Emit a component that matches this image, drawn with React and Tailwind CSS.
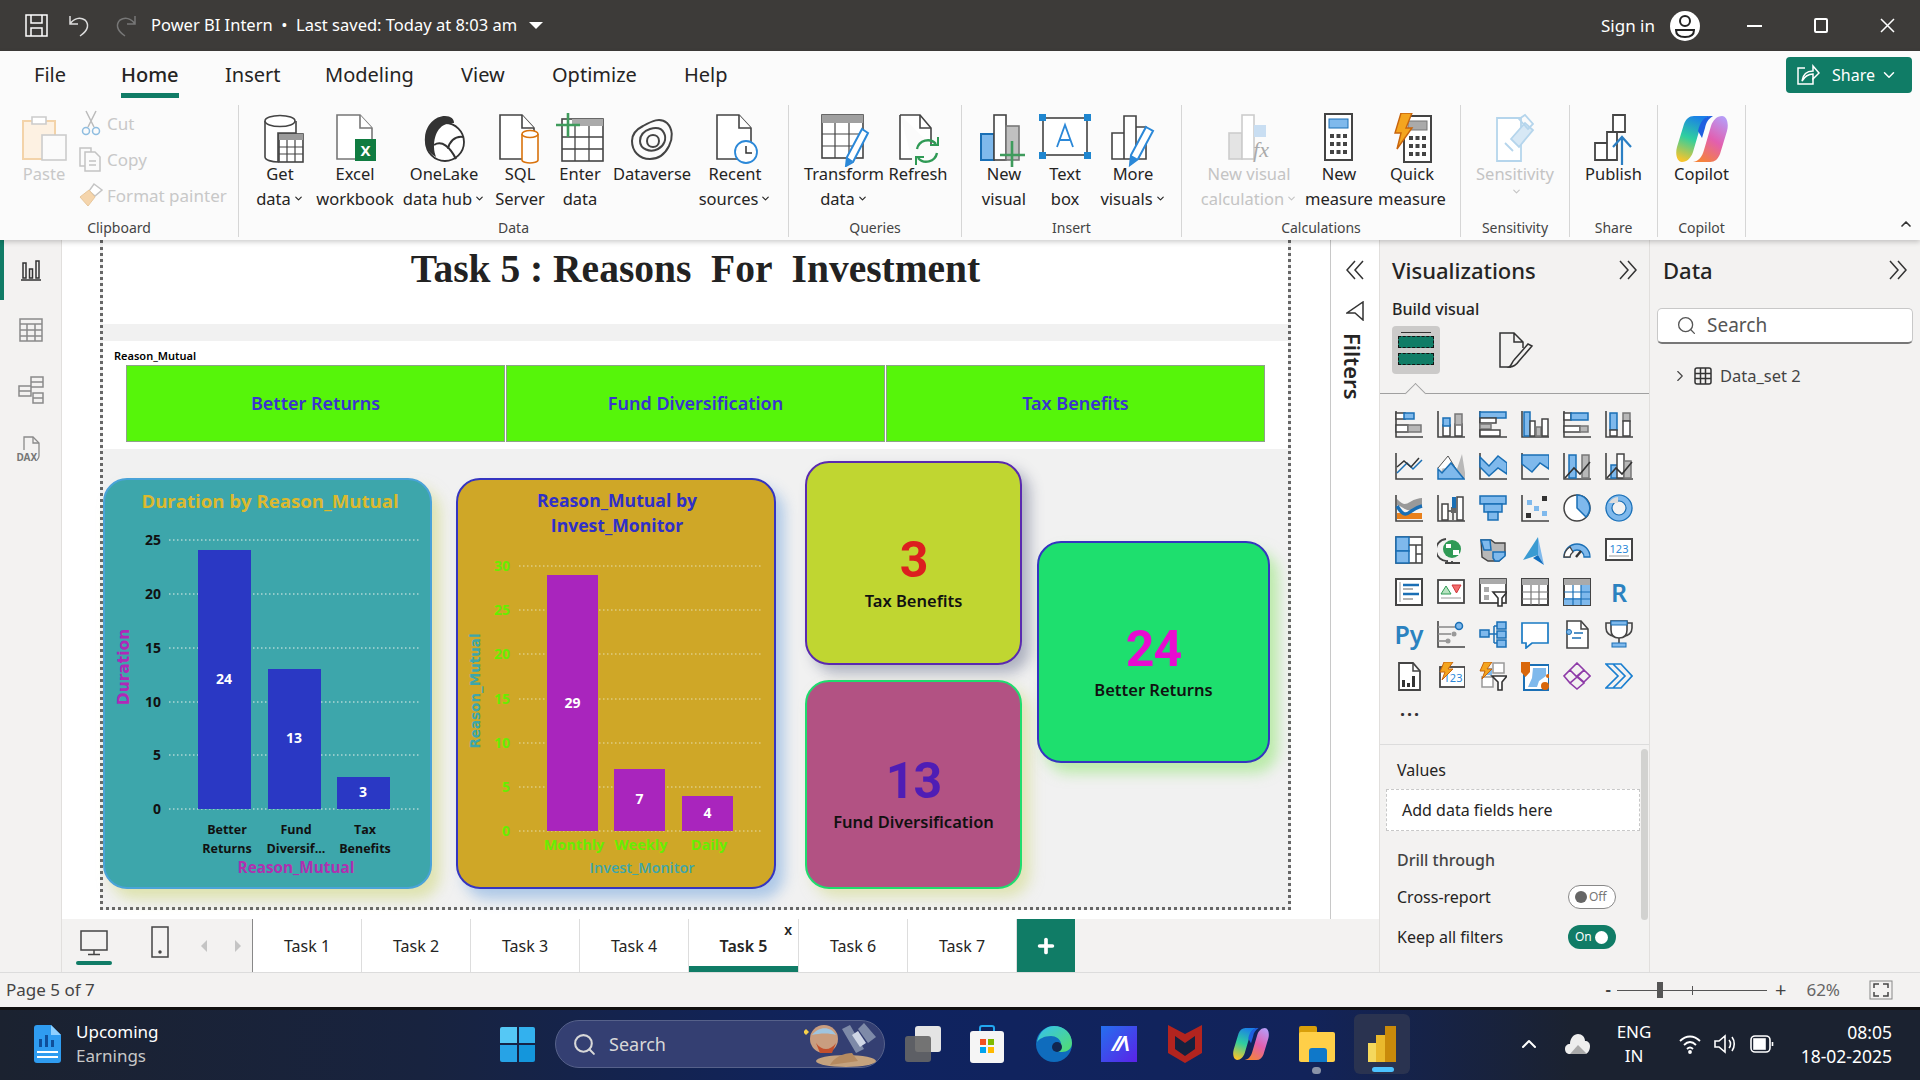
import { Search, ChevronDown, ChevronRight, ChevronUp, Plus } from "lucide-react";

const D = "#444";
const B = "#1a6fb5";
const L = "#7fb9ec";
const G = "#b8b8b8";

// ---------- ribbon icons ----------
const GetDataIcon = () => (
  <svg width="52" height="54" viewBox="0 0 52 54" fill="none">
    <path d="M11 8v36c0 3 7 5 13 5V20h18V8" fill="#fff" stroke={D} strokeWidth="1.6" />
    <ellipse cx="26" cy="8" rx="15" ry="5.5" fill="#fff" stroke={D} strokeWidth="1.6" />
    <rect x="25" y="21" width="24" height="28" fill="#fff" stroke={D} strokeWidth="1.6" />
    <rect x="25" y="21" width="24" height="6" fill="#9a9a9a" />
    <path d="M33 27v22M41 27v22M25 34h24M25 41h24" stroke={D} strokeWidth="1.2" />
  </svg>
);
const ExcelIcon = () => (
  <svg width="52" height="54" viewBox="0 0 52 54" fill="none">
    <path d="M8 2h23l12 13v31H8z" fill="#fff" stroke="#777" strokeWidth="1.6" />
    <path d="M31 2v13h12" fill="#fff" stroke="#777" strokeWidth="1.6" />
    <rect x="26" y="26" width="21" height="22" fill="#107c41" />
    <text x="36.5" y="43" textAnchor="middle" fontSize="15" fontWeight="700" fill="#fff">X</text>
  </svg>
);
const OneLakeIcon = () => (
  <svg width="52" height="54" viewBox="0 0 52 54" fill="none">
    <circle cx="27" cy="29" r="19" fill="#fff" stroke="#333" strokeWidth="1.8" />
    <path d="M27 3c6 0 9 3 9 7-12-1-20 8-20 24 0 4 1 7 2 10-9-5-12-13-11-20C8 12 17 3 27 3z" fill="#333" />
    <path d="M16 32c8-5 16 2 22 14M46 24c-10-2-15 6-16 12" stroke="#333" strokeWidth="2" />
  </svg>
);
const SqlIcon = () => (
  <svg width="52" height="54" viewBox="0 0 52 54" fill="none">
    <path d="M6 2h22l12 13v31H6z" fill="#fff" stroke={D} strokeWidth="1.6" />
    <path d="M28 2v13h12" fill="#fff" stroke={D} strokeWidth="1.6" />
    <path d="M28 21v26c0 2 5 3 8 3s8-1 8-3V21" fill="#fff" stroke="#d9730d" strokeWidth="1.6" />
    <ellipse cx="36" cy="21" rx="8" ry="3.5" fill="#fff" stroke="#d9730d" strokeWidth="1.6" />
  </svg>
);
const EnterDataIcon = () => (
  <svg width="52" height="54" viewBox="0 0 52 54" fill="none">
    <rect x="8" y="6" width="41" height="42" fill="#fff" stroke={D} strokeWidth="1.6" />
    <rect x="18" y="6" width="31" height="7" fill="#aaa" />
    <path d="M21 13v35M35 13v35M8 24h41M8 36h41" stroke={D} strokeWidth="1.3" />
    <path d="M14 0v24M2 12h24" stroke="#3f9b5c" strokeWidth="2.6" />
  </svg>
);
const DataverseIcon = () => (
  <svg width="52" height="54" viewBox="0 0 52 54" fill="none" stroke="#444" strokeWidth="2">
    <path d="M6 28c0-7 5-12 11-15 9-5 17-9 24-3 6 6 6 15 2 23-4 8-11 13-19 13C13 46 6 38 6 28z" />
    <path d="M14 28c0-6 4-10 10-12 7-2 12 0 14 4 3 6 0 13-6 16-8 4-18 0-18-8z" />
    <path d="M21 28c0-4 3-6 6-6s6 2 6 6-3 6-6 6-6-2-6-6z" />
  </svg>
);
const RecentIcon = () => (
  <svg width="52" height="54" viewBox="0 0 52 54" fill="none">
    <path d="M8 2h22l12 13v31H8z" fill="#fff" stroke={D} strokeWidth="1.6" />
    <path d="M30 2v13h12" fill="#fff" stroke={D} strokeWidth="1.6" />
    <circle cx="37" cy="39" r="11" fill="#fff" stroke="#2b88d8" strokeWidth="1.8" />
    <path d="M37 33v7h6" stroke="#333" strokeWidth="1.5" />
  </svg>
);
const TransformIcon = () => (
  <svg width="52" height="54" viewBox="0 0 52 54" fill="none">
    <rect x="4" y="2" width="41" height="43" fill="#fff" stroke={D} strokeWidth="1.6" />
    <rect x="4" y="2" width="41" height="8" fill="#a0a0a0" />
    <path d="M17 10v35M31 10v35M4 21h41M4 33h41" stroke={D} strokeWidth="1.2" />
    <path d="M44 16l6 4-15 29-7 4 1-9z" fill="#fff" stroke="#2b88d8" strokeWidth="2" />
    <path d="M28 53l1-9 6 4z" fill="#2b88d8" />
  </svg>
);
const RefreshIcon = () => (
  <svg width="52" height="54" viewBox="0 0 52 54" fill="none">
    <path d="M8 2h20l11 13v17M20 46H8V2" fill="#fff" stroke={D} strokeWidth="1.6" />
    <path d="M28 2v13h11" stroke={D} strokeWidth="1.6" />
    <path d="M25 36a11 11 0 0 1 19-5M45 40a11 11 0 0 1-19 5" stroke="#2f9a55" strokeWidth="2.4" />
    <path d="M46 24v8h-8M24 52v-8h8" stroke="#2f9a55" strokeWidth="2" />
  </svg>
);
const NewVisualIcon = () => (
  <svg width="52" height="54" viewBox="0 0 52 54" fill="none">
    <rect x="3" y="21" width="13" height="26" fill={L} stroke={B} strokeWidth="2" />
    <rect x="16" y="2" width="12" height="45" fill="#fff" stroke={D} strokeWidth="1.6" />
    <rect x="28" y="13" width="13" height="34" fill="#c0c0c0" stroke="#777" strokeWidth="1.6" />
    <path d="M34 28v26M22 42h25" stroke="#3f9b5c" strokeWidth="2.6" />
  </svg>
);
const TextBoxIcon = () => (
  <svg width="52" height="54" viewBox="0 0 52 54" fill="none">
    <rect x="4" y="5" width="44" height="37" fill="#fff" stroke={D} strokeWidth="1.6" />
    <path d="M0 1h7v7H0zM45 1h7v7h-7zM0 39h7v7H0zM45 39h7v7h-7z" fill="#1f86cf" />
    <path d="M18 34l8-22 8 22M21 27h10" stroke="#2b88d8" strokeWidth="1.8" />
  </svg>
);
const MoreVisualsIcon = () => (
  <svg width="52" height="54" viewBox="0 0 52 54" fill="none">
    <path d="M5 20h12v26H5zM17 3h12v43H17zM29 14h10v32H29z" fill="#fff" stroke={D} strokeWidth="1.6" />
    <path d="M39 14l7 4-15 28-8 6 1-10z" fill="#fff" stroke="#2b88d8" strokeWidth="2" />
    <path d="M23 52l1-10 7 4z" fill="#2b88d8" />
  </svg>
);
const NewCalcIcon = () => (
  <svg width="52" height="54" viewBox="0 0 52 54" fill="none">
    <rect x="6" y="20" width="13" height="26" fill="#e4e4e4" stroke="#ccc" strokeWidth="1.6" />
    <rect x="19" y="2" width="12" height="44" fill="#fff" stroke="#ccc" strokeWidth="1.6" />
    <rect x="31" y="12" width="12" height="12" fill="#c9def2" />
    <text x="38" y="44" textAnchor="middle" fontFamily="'Liberation Serif',serif" fontStyle="italic" fontSize="22" fill="#aaa">fx</text>
  </svg>
);
const Calculator = ({ top }) => (
  <>
    <rect x="12" y="1" width="27" height="46" fill="#fff" stroke={D} strokeWidth="2" />
    <rect x="16" y="6" width="19" height="9" fill={top} stroke={top === L ? B : "#777"} />
    {[21, 29, 37].map((y) => [17, 23.5, 30].map((x) => <rect key={`${x}-${y}`} x={x} y={y} width="4" height="4" fill="#444" />))}
  </>
);
const NewMeasureIcon = () => (
  <svg width="52" height="54" viewBox="0 0 52 54" fill="none"><Calculator top={L} /></svg>
);
const QuickMeasureIcon = () => (
  <svg width="52" height="54" viewBox="0 0 52 54" fill="none">
    <g transform="translate(6 2)"><Calculator top="#aaa" /></g>
    <path d="M15 0h11l-6 15h6L11 36l4-16H9z" fill="#f4a51f" stroke="#c8640c" strokeWidth="1.4" />
  </svg>
);
const SensitivityIcon = () => (
  <svg width="52" height="54" viewBox="0 0 52 54" fill="none" stroke="#b5d5ec" strokeWidth="1.8">
    <path d="M8 5h24v43H8z" fill="#fff" />
    <path d="M22 26l14-16 8 7-14 17z" fill="#d7e8f5" />
    <path d="M30 6l6-4 8 9-5 5zM16 30l8 8" />
  </svg>
);
const PublishIcon = () => (
  <svg width="52" height="54" viewBox="0 0 52 54" fill="none">
    <path d="M7 30h12v17H7zM19 19h10v28H19zM25 2h12v17H25z" fill="#fff" stroke="#444" strokeWidth="1.8" />
    <path d="M34 52V24M25 34l9-10 9 10" stroke="#2b7fc4" strokeWidth="2.2" />
  </svg>
);
const CopilotIcon = ({ size = 52, id = "cp" }) => (
  <svg width={size} height={size} viewBox="0 0 52 52" fill="none">
    <defs>
      <linearGradient id={`${id}1`} x1="0.6" y1="0" x2="0.3" y2="1">
        <stop offset="0" stopColor="#1a7fe8" />
        <stop offset="0.5" stopColor="#2fcf9f" />
        <stop offset="1" stopColor="#f6c42c" />
      </linearGradient>
      <linearGradient id={`${id}2`} x1="0.8" y1="0" x2="0.3" y2="1">
        <stop offset="0" stopColor="#b79bf5" />
        <stop offset="0.5" stopColor="#e25fb0" />
        <stop offset="1" stopColor="#f5823b" />
      </linearGradient>
    </defs>
    <path d="M18 3h17c-6 1-9 5-11 12l-7 24c-2 6-6 10-11 10C1 49-1 41 1 34L8 11C10 6 13 3 18 3z" fill={`url(#${id}1)`} />
    <path d="M34 49H17c6-1 9-5 11-12l7-24c2-6 6-10 11-10 5 0 7 8 5 15l-7 23c-2 5-5 8-10 8z" fill={`url(#${id}2)`} />
    <path d="M22 18c2-9 6-14 12-15h3c-5 3-7 7-8 12l-3 10z" fill="#1f5fe0" />
  </svg>
);
const ShareIcon = () => (
  <svg width="24" height="22" viewBox="0 0 24 22" fill="none" stroke="#fff" strokeWidth="1.5">
    <path d="M9 4H2v16h15v-6" />
    <path d="M6 17c1-7 5-10 11-10V2l6 7-6 6v-5c-4 0-8 2-11 7z" />
  </svg>
);

// ---------- visual gallery ----------
const Axis = () => <path d="M1 1v26h27" stroke={D} strokeWidth="1.6" fill="none" />;
const Box = ({ x, y, w, h, f = "#fff", s = D }) => <rect x={x} y={y} width={w} height={h} fill={f} stroke={s} strokeWidth="1.5" />;

const vizIcons = [
  <><Axis /><Box x={1} y={3} w={9} h={6} /><Box x={9} y={3} w={10} h={6} f={L} s={B} /><Box x={1} y={15} w={12} h={7} /><Box x={13} y={15} w={13} h={7} f={G} s="#777" /></>,
  <><Axis /><Box x={6} y={15} w={7} h={11} /><Box x={6} y={8} w={7} h={8} f={L} s={B} /><Box x={18} y={14} w={7} h={12} /><Box x={18} y={4} w={7} h={11} f={G} s="#777" /></>,
  <><Axis /><Box x={1} y={2} w={26} h={6} f={L} s={B} /><Box x={1} y={8} w={16} h={5} /><Box x={1} y={14} w={11} h={5} f={G} s="#777" /><Box x={1} y={20} w={20} h={6} /></>,
  <><Axis /><Box x={3} y={2} w={6} h={24} f={L} s={B} /><Box x={9} y={11} w={5} h={15} /><Box x={15} y={17} w={5} h={9} f={G} s="#777" /><Box x={21} y={9} w={6} h={17} /></>,
  <><Axis /><Box x={1} y={3} w={7} h={7} /><Box x={8} y={3} w={17} h={7} f={L} s={B} /><Box x={1} y={16} w={16} h={6} /><Box x={17} y={16} w={8} h={6} f={G} s="#777" /></>,
  <><Axis /><Box x={5} y={3} w={7} h={17} f={L} s={B} /><Box x={5} y={20} w={7} h={6} /><Box x={18} y={3} w={7} h={8} f={G} s="#777" /><Box x={18} y={11} w={7} h={15} /></>,
  <><Axis /><path d="M2 21l10-10 6 6 9-9" stroke={B} strokeWidth="1.5" fill="none" /><path d="M2 15l7-6 7 6 8-9" stroke="#333" strokeWidth="1.5" fill="none" /></>,
  <><path d="M1 27l10-23 8 16 6-18 4 25z" fill={G} /><path d="M1 16l10-12 8 13" stroke="#555" fill="#fff" /><path d="M1 27V17l4 4 9-10 13 16z" fill={L} stroke={B} strokeWidth="1.5" /></>,
  <><Axis /><path d="M1 5l9 9 9-10 9 7v11l-9-6-9 8-9-9z" fill={L} stroke={B} strokeWidth="1.5" /></>,
  <><Axis /><path d="M1 3h27v14l-9-6-8 9-10-8z" fill={L} stroke={B} strokeWidth="1.5" /></>,
  <><Axis /><Box x={6} y={3} w={7} h={23} f={L} s={B} /><Box x={19} y={3} w={7} h={23} f={G} s="#777" /><path d="M2 26l9-10 6 6 10-12" stroke="#333" strokeWidth="1.6" fill="none" /></>,
  <><Axis /><Box x={6} y={13} w={7} h={13} f={L} s={B} /><Box x={12} y={2} w={7} h={24} /><Box x={19} y={9} w={7} h={17} f={G} s="#777" /><path d="M2 26l9-10 6 6 10-12" stroke="#333" strokeWidth="1.6" fill="none" /></>,
  <><Axis /><path d="M2 5c6 6 8 6 13 3s9-4 12-4v8c-4 0-8 3-12 4s-7-3-13-5z" fill="#999" /><rect x="2" y="19" width="25" height="6" fill="#e8801c" /><path d="M2 12c5 8 8 10 13 6s8-5 12-6" stroke={B} strokeWidth="3.5" fill="none" /></>,
  <><Axis /><Box x={5} y={10} w={6} h={16} /><path d="M11 17h5v9" stroke={D} strokeWidth="1.5" fill="none" /><rect x="14" y="13" width="5" height="6" fill="#666" /><rect x="15" y="3" width="4" height="11" fill={B} /><Box x={20} y={3} w={6} h={23} /></>,
  <><Box x={1} y={2} w={26} h={8} f={L} s={B} /><Box x={5} y={10} w={18} h={8} f={L} s={B} /><Box x={9} y={18} w={10} h={8} f={L} s={B} /></>,
  <><Axis /><rect x="6" y="6" width="5" height="5" fill={L} /><rect x="21" y="2" width="5" height="5" fill="#333" /><rect x="13" y="12" width="5" height="5" fill={L} /><rect x="5" y="19" width="5" height="5" fill="#333" /><rect x="21" y="17" width="5" height="5" fill={L} /></>,
  <><circle cx="14" cy="14" r="13" fill="#fff" stroke="#444" strokeWidth="1.5" /><path d="M14 1a13 13 0 0 1 9 22L14 14z" fill={L} stroke={B} strokeWidth="1.5" /></>,
  <><circle cx="14" cy="14" r="10" fill="none" stroke={L} strokeWidth="7" /><circle cx="14" cy="14" r="13" fill="none" stroke={B} strokeWidth="1.2" /><circle cx="14" cy="14" r="7" fill="#f3f2f1" stroke={B} strokeWidth="1.2" /><path d="M4 9a11 11 0 0 1 9-6v6" fill="#ddd" /></>,
  <><rect x="1" y="1" width="26" height="26" fill="#fff" stroke={D} strokeWidth="1.6" /><rect x="1" y="1" width="13" height="14" fill={L} stroke={B} strokeWidth="1.5" /><rect x="1" y="15" width="13" height="12" fill={L} stroke={B} strokeWidth="1.5" /><path d="M14 9h13M21 9v18M21 18h6" stroke={D} strokeWidth="1.5" /></>,
  <><path d="M9 3a11 11 0 0 0 2 22M8 27h15M15 25v2" stroke="#444" strokeWidth="1.8" fill="none" /><circle cx="15" cy="13" r="9" fill="#2f9a55" /><path d="M9 8h5v4h-5zM16 14h6v5h-6z" fill="#fff" /></>,
  <><path d="M2 4h10l4 3h10v12l-6 6H9l-6-4z" fill={G} stroke="#444" strokeWidth="1.4" /><path d="M2 4h9l1 10H5z" fill={L} stroke={B} strokeWidth="1.5" /><path d="M14 16h12v4l-6 5h-4l-2-3z" fill={L} stroke={B} strokeWidth="1.5" /></>,
  <><path d="M17 1L2 24l15-5z" fill="#3a9bd2" /><path d="M17 1l6 28-6-10z" fill={L} /><path d="M17 19l6 10-11-7z" fill="#0f6cbd" /></>,
  <><path d="M1 21a13 13 0 0 1 26 0h-6a7 7 0 0 0-14 0z" fill="#7fb9ec" stroke={B} strokeWidth="1.3" /><path d="M1 21a13 13 0 0 1 6-10l3 5a7 7 0 0 0-3 5z" fill="#fff" stroke="#444" strokeWidth="1.3" /><path d="M13 21l5-6" stroke="#333" strokeWidth="2.4" /></>,
  <><rect x="1" y="3" width="26" height="21" fill="#fff" stroke={D} strokeWidth="2" /><text x="14" y="17" textAnchor="middle" fontSize="11" fill="#2b88d8">123</text><path d="M4 20h20" stroke="#999" /></>,
  <><rect x="1" y="1" width="26" height="26" fill="#fff" stroke={D} strokeWidth="2" /><path d="M5 4v20" stroke="#999" /><path d="M8 7h16M8 16h16" stroke={B} strokeWidth="2.6" /><path d="M8 11h10M8 21h10" stroke="#999" strokeWidth="1.6" /></>,
  <><rect x="1" y="2" width="26" height="23" fill="#fff" stroke={D} strokeWidth="1.8" /><path d="M9 8l5 8H4z" fill="#b7e3c0" stroke="#2f9a55" /><path d="M15 7h9l-4.5 8z" fill="#f26d6d" stroke="#d13438" /><path d="M4 20h20" stroke="#999" /></>,
  <><rect x="1" y="1" width="26" height="24" fill="#fff" stroke={D} strokeWidth="1.8" /><rect x="1" y="1" width="26" height="5" fill="#aaa" /><rect x="5" y="9" width="5" height="5" fill="#aaa" /><rect x="5" y="17" width="5" height="5" fill="#aaa" /><path d="M14 14h14l-5 6v8h-4v-8z" fill="#fff" stroke="#333" strokeWidth="1.6" /></>,
  <><rect x="1" y="1" width="26" height="26" fill="#fff" stroke={D} strokeWidth="2" /><rect x="1" y="1" width="26" height="6" fill="#aaa" /><path d="M10 7v20M18 7v20M1 14h26M1 21h26" stroke="#777" strokeWidth="1.2" /></>,
  <><rect x="1" y="1" width="26" height="26" fill="#fff" stroke={D} strokeWidth="2" /><rect x="1" y="1" width="26" height="6" fill="#aaa" /><rect x="18" y="7" width="9" height="20" fill={L} /><rect x="1" y="20" width="26" height="7" fill={L} /><path d="M10 7v20M18 7v20M1 14h26M1 21h26" stroke={B} strokeWidth="1.2" /></>,
  "R",
  "Py",
  <><Axis /><path d="M1 7h17M1 14h13M1 21h9" stroke="#888" strokeWidth="1.4" /><circle cx="22" cy="6" r="3.5" fill={L} stroke={B} strokeWidth="1.5" /><circle cx="17" cy="14" r="2.5" fill="#999" /><circle cx="11" cy="21" r="2.5" fill="#999" /></>,
  <><path d="M9 14h6M15 6v17M15 6h3M15 14h3M15 23h3" stroke={B} strokeWidth="1.5" /><Box x={1} y={10} w={9} h={7} f={L} s={B} /><Box x={18} y={2} w={9} h={7} f={L} s={B} /><Box x={18} y={11} w={9} h={7} f={L} s={B} /><Box x={18} y={20} w={9} h={7} f={L} s={B} /></>,
  <path d="M1 3h26v20H11l-6 5v-5H1z" fill="#fff" stroke="#1a7bc4" strokeWidth="1.7" />,
  <><path d="M4 1h14l7 8v19H4z" fill="#fff" stroke={D} strokeWidth="1.6" /><path d="M18 1v8h7" fill="none" stroke={D} strokeWidth="1.5" /><circle cx="6" cy="12" r="2.5" fill={L} stroke={B} /><path d="M11 13h9M9 18h9" stroke={B} strokeWidth="1.4" /></>,
  <><path d="M6 3H1v5c0 5 4 8 8 8M22 3h5v5c0 5-4 8-8 8" fill="none" stroke="#444" strokeWidth="1.6" /><path d="M6 1h16v9c0 5-3 8-8 8s-8-3-8-8z" fill="#fff" stroke="#444" strokeWidth="1.6" /><rect x="6" y="1" width="16" height="4" fill={L} stroke={B} /><path d="M14 18v5" stroke="#444" strokeWidth="1.6" /><rect x="7" y="23" width="14" height="4" fill={L} stroke={B} /></>,
  <><path d="M4 1h14l7 8v19H4z" fill="#fff" stroke={D} strokeWidth="1.8" /><path d="M18 1v8h7" fill="none" stroke={D} strokeWidth="1.5" /><path d="M7 18h3v7H7zM12 21h3v4h-3zM17 14h3v11h-3z" fill="#333" /></>,
  <><rect x="3" y="5" width="25" height="20" fill="#fff" stroke={D} strokeWidth="1.8" /><text x="16" y="20" textAnchor="middle" fontSize="11" fill="#2b88d8">123</text><path d="M7 0h9l-5 7h5L5 18l3-8H3z" fill="#f4a51f" stroke="#c8640c" /></>,
  <><Box x={14} y={1} w={11} h={10} s="#999" /><Box x={3} y={15} w={11} h={10} s="#999" /><rect x="5" y="6" width="8" height="7" fill={L} /><path d="M13 14h15l-5 6v8h-4v-8z" fill="#fff" stroke="#333" strokeWidth="1.6" /><path d="M5 0h8l-5 7h5L3 17l3-8H1z" fill="#f4a51f" stroke="#c8640c" /></>,
  <><path d="M3 3h25v25H3z" fill="#fff" stroke="#1a6fb5" strokeWidth="2" /><path d="M12 6h13v8l-7 5-2 6H7l4-9z" fill={L} /><path d="M0 0h9v10l-4.500 5L0 10z" fill="#d9670b" /><circle cx="24" cy="24" r="4" fill="#d9670b" /><circle cx="27" cy="14" r="2" fill="#d9670b" /></>,
  <g fill="none" stroke="#8e3ba8" strokeWidth="1.6"><path d="M14 1l7 7-7 7-7-7zM21 8l6 6-6 6-7-6zM7 8l7 7-7 6-6-7zM14 15l7 6-7 6-7-6z" /></g>,
  <g fill="none" stroke="#1a7fd0" strokeWidth="1.7"><path d="M1 2h15l11 12-11 12H1l12-12zM8 26l12-12-12-12" /></g>,
];

const VizIcon = ({ i }) => {
  const icon = vizIcons[i];
  if (typeof icon === "string") {
    return <div className="flex items-center justify-center text-[25px] leading-[30px] font-semibold text-[#2b82c0]">{icon}</div>;
  }
  return (
    <div className="flex items-center justify-center">
      <svg width="28" height="29" viewBox="0 0 28 29" fill="none">{icon}</svg>
    </div>
  );
};

// ---------- ribbon bits ----------
function RItem({ w, icon, l1, l2, caret, off }) {
  return (
    <div className={`flex flex-col items-center ${w} ${off ? "text-[#c4c4c4]" : "text-[#252423]"}`}>
      <div className="h-[54px] w-[52px]">{icon}</div>
      <div className="-mt-[6px] whitespace-nowrap text-center text-[16.5px] leading-[25px]">{l1}</div>
      <div className="flex items-center whitespace-nowrap text-center text-[16.5px] leading-[25px]">
        {l2}
        {caret && <ChevronDown size={11} strokeWidth={2.5} className="ml-[2px]" />}
      </div>
    </div>
  );
}

function RGroup({ w, pad, label, children }) {
  return (
    <div className={`flex h-[132px] flex-col border-r border-[#d6d6d6] ${w}`}>
      <div className={`flex h-[116px] pt-[8px] ${pad}`}>{children}</div>
      <div className="flex-1 text-center text-[14px] leading-[19px] text-[#444]">{label}</div>
    </div>
  );
}

const DoubleChevron = ({ left }) => (
  <svg width="18" height="20" viewBox="0 0 18 20" fill="none" stroke="#333" strokeWidth="1.5">
    {left ? <path d="M9 1L1 10l8 9M17 1l-8 9 8 9" /> : <path d="M1 1l8 9-8 9M9 1l8 9-8 9" />}
  </svg>
);

// ---------- report visuals ----------
function DurationChart() {
  const ticks = [[25, 540], [20, 594], [15, 648], [10, 702], [5, 755], [0, 809]];
  const bars = [[198, 550, 24, 679], [268, 669, 13, 738], [337, 777, 3, 792]];
  return (
    <svg width="325" height="407" viewBox="105 480 325 407" className="block font-['Open_Sans',sans-serif]">
      <text x="270" y="508" textAnchor="middle" fontSize="18.6" fontWeight="700" fill="#dcb92e">Duration by Reason_Mutual</text>
      {ticks.map(([t, y]) => (
        <g key={t}>
          <path d={`M169 ${y}H421`} stroke="#e6efe9" strokeDasharray="1.5 2.5" />
          <text x="161" y={y + 5} textAnchor="end" fontSize="14" fontWeight="700" fill="#111">{t}</text>
        </g>
      ))}
      {bars.map(([x, top, v, ly]) => (
        <g key={v}>
          <rect x={x} y={top} width="53" height={809 - top} fill="#2a38c4" />
          <text x={x + 26} y={ly + 5} textAnchor="middle" fontSize="14" fontWeight="700" fill="#fff">{v}</text>
        </g>
      ))}
      {[[227, "Better", "Returns"], [296, "Fund", "Diversif..."], [365, "Tax", "Benefits"]].map(([x, a, b]) => (
        <text key={a} textAnchor="middle" fontSize="12.5" fontWeight="700" fill="#111">
          <tspan x={x} y="834">{a}</tspan>
          <tspan x={x} y="853">{b}</tspan>
        </text>
      ))}
      <text x="296" y="873" textAnchor="middle" fontSize="15.3" fontWeight="700" fill="#b030b0">Reason_Mutual</text>
      <text transform="translate(129 667) rotate(-90)" textAnchor="middle" fontFamily="'DejaVu Sans',sans-serif" fontSize="15.5" fontWeight="700" fill="#b028b8">Duration</text>
    </svg>
  );
}

function MonitorChart() {
  const ticks = [[30, 566], [25, 610], [20, 654], [15, 699], [10, 743], [5, 787], [0, 831]];
  const bars = [[547, 575, 29, 703], [614, 769, 7, 799], [682, 796, 4, 813]];
  return (
    <svg width="316" height="407" viewBox="458 480 316 407" className="block font-['Open_Sans',sans-serif]">
      <text textAnchor="middle" fontSize="17.6" fontWeight="700" fill="#3030c8">
        <tspan x="617" y="507">Reason_Mutual by</tspan>
        <tspan x="617" y="532">Invest_Monitor</tspan>
      </text>
      {ticks.map(([t, y]) => (
        <g key={t}>
          <path d={`M519 ${y}H761`} stroke="#e6dfae" strokeDasharray="1.5 2.5" />
          <text x="510" y={y + 5} textAnchor="end" fontSize="14" fontWeight="700" fill="#66ee00">{t}</text>
        </g>
      ))}
      {bars.map(([x, top, v, ly]) => (
        <g key={v}>
          <rect x={x} y={top} width="51" height={831 - top} fill="#a925bd" />
          <text x={x + 25.5} y={ly + 5} textAnchor="middle" fontSize="14" fontWeight="700" fill="#fff">{v}</text>
        </g>
      ))}
      {[[574, "Monthly"], [641, "Weekly"], [709, "Daily"]].map(([x, c]) => (
        <text key={c} x={x} y="850" textAnchor="middle" fontSize="14.5" fontWeight="700" fill="#66ee00">{c}</text>
      ))}
      <text x="642" y="873" textAnchor="middle" fontSize="14.5" fontWeight="600" fill="#3da6ab">Invest_Monitor</text>
      <text transform="translate(480 691) rotate(-90)" textAnchor="middle" fontFamily="'DejaVu Sans',sans-serif" fontSize="13.5" fontWeight="600" fill="#3da6ab">Reason_Mutual</text>
    </svg>
  );
}

function KpiCard({ className, value, valueClass, label }) {
  return (
    <div className={`flex flex-col items-center rounded-[24px] border-2 ${className}`}>
      <div className={`font-['Roboto',sans-serif] text-[50px] leading-[50px] font-bold tracking-[-1px] ${valueClass}`}>{value}</div>
      <div className="mt-[4px] text-[16.5px] leading-[24px] font-semibold text-[#111]">{label}</div>
    </div>
  );
}

// ---------- taskbar icons ----------
const WidgetIcon = () => (
  <svg width="28" height="38" viewBox="0 0 28 38">
    <path d="M3 0h14l10 10v25a3 3 0 0 1-3 3H3a3 3 0 0 1-3-3V3a3 3 0 0 1 3-3z" fill="#2f9cf0" />
    <path d="M17 0l10 10H17z" fill="#8fd0ff" />
    <path d="M5 14h3v8H5zM11 10h3v12h-3zM17 15h3v7h-3z" fill="#0f4f9a" />
    <path d="M3 26h21v2H3zM3 31h21v2H3z" fill="#fff" />
  </svg>
);
const WinLogo = () => (
  <div className="grid h-[35px] w-[35px] grid-cols-2 gap-[2px]">
    <div className="rounded-tl-[2px] bg-[#55c8f5]" />
    <div className="rounded-tr-[2px] bg-[#33b1ee]" />
    <div className="rounded-bl-[2px] bg-[#27a3e6]" />
    <div className="rounded-br-[2px] bg-[#1496dc]" />
  </div>
);
const SearchArt = () => (
  <svg width="76" height="46" viewBox="0 0 76 46">
    <circle cx="20" cy="18" r="14" fill="#c99d7f" />
    <path d="M8 14c6-8 18-10 24 0-6-2-16-2-24 0z" fill="#9fc4e0" />
    <path d="M12 22c6 8 14 8 20 0l-4 10H16z" fill="#c24f2d" />
    <path d="M2 8l3 3-3 3-3-3z" fill="#f7d14a" />
    <path d="M46 4l14 24-8 4-14-24zM60 2l12 14-8 6-10-14z" fill="#7e8aa8" />
    <path d="M48 14l6-4 8 12-6 4z" fill="#cfd6e5" />
    <ellipse cx="42" cy="40" rx="30" ry="6" fill="#c4a27e" />
    <path d="M26 44c4-8 14-12 22-12l6 8z" fill="#b58a60" />
  </svg>
);
const EdgeIcon = () => (
  <svg width="36" height="38" viewBox="0 0 36 38">
    <defs>
      <linearGradient id="edge" x1="0" y1="0" x2="1" y2="1">
        <stop offset="0" stopColor="#35c1f1" />
        <stop offset="1" stopColor="#53dd6c" />
      </linearGradient>
    </defs>
    <circle cx="18" cy="19" r="18" fill="#0f6cbd" />
    <path d="M1 17C3 7 10 1 18 1c10 0 18 7 18 17 0 6-5 9-10 9-4 0-6-2-6-4 4-1 5-3 5-5-1-4-5-7-10-7-7 0-12 3-14 6z" fill="url(#edge)" />
    <circle cx="21" cy="22" r="5" fill="#12264f" />
  </svg>
);
const StoreIcon = () => (
  <svg width="34" height="38" viewBox="0 0 34 38">
    <path d="M10 7V3a2 2 0 0 1 2-2h10a2 2 0 0 1 2 2v4" fill="none" stroke="#22a7f0" strokeWidth="2" />
    <rect x="0" y="6" width="34" height="32" rx="3" fill="#f5f5f5" />
    <path d="M10 14h6v6h-6z" fill="#f25022" />
    <path d="M18 14h6v6h-6z" fill="#7fba00" />
    <path d="M10 22h6v6h-6z" fill="#00a4ef" />
    <path d="M18 22h6v6h-6z" fill="#ffb900" />
  </svg>
);

export default function App() {
  return (
    <div className="flex h-[1080px] w-[1920px] flex-col overflow-hidden bg-white font-['Noto_Sans',sans-serif] text-[#252423]">
      {/* title bar */}
      <div className="flex h-[51px] shrink-0 items-center bg-[#3d3b39] pl-[25px] text-white">
        <svg width="23" height="23" viewBox="0 0 23 23" fill="none" stroke="#fff" strokeWidth="1.5">
          <path d="M1 1h21v21H1zM6 1v8h11V1M6 22v-8h11v8" />
        </svg>
        <svg className="ml-[21px]" width="22" height="24" viewBox="0 0 22 24" fill="none" stroke="#ddd" strokeWidth="1.5">
          <path d="M1 2v8h8M1 10c4-6 10-7 15-4 4 4 4 10-5 16" />
        </svg>
        <svg className="ml-[23px]" width="22" height="24" viewBox="0 0 22 24" fill="none" stroke="#777" strokeWidth="1.5">
          <path d="M21 2v8h-8M21 10c-4-6-10-7-15-4-4 4-4 10 5 16" />
        </svg>
        <div className="ml-[15px] text-[16.5px] whitespace-nowrap">Power BI Intern&nbsp; • &nbsp;Last saved: Today at 8:03 am</div>
        <div className="ml-[12px] h-0 w-0 border-x-[7px] border-t-[7px] border-x-transparent border-t-white" />
        <div className="ml-auto text-[17px]">Sign in</div>
        <svg className="ml-[14px]" width="32" height="32" viewBox="0 0 32 32">
          <circle cx="16" cy="16" r="15" fill="#fff" />
          <circle cx="16" cy="11" r="5" fill="none" stroke="#222" strokeWidth="2" />
          <path d="M7 20h18c0 5-4 7-9 7s-9-2-9-7z" fill="none" stroke="#222" strokeWidth="2" />
        </svg>
        <div className="ml-[46px] h-[2px] w-[15px] bg-white" />
        <div className="ml-[52px] h-[15px] w-[14px] rounded-[2px] border-2 border-white" />
        <svg className="mr-[25px] ml-[52px]" width="15" height="15" viewBox="0 0 15 15" stroke="#fff" strokeWidth="1.5">
          <path d="M1 1l13 13M14 1L1 14" />
        </svg>
      </div>

      {/* ribbon */}
      <div className="relative z-10 h-[189px] shrink-0 bg-[#fbfbfb] shadow-[0_2px_5px_rgba(0,0,0,0.2)]">
        <div className="flex h-[54px] items-start pl-[34px] text-[20px] leading-[28px]">
          <div className="w-[87px] pt-[10px]">File</div>
          <div className="w-[104px] pt-[10px]">
            <div className="inline-block font-medium">
              Home
              <div className="mt-[4px] h-[5px] bg-[#107c66]" />
            </div>
          </div>
          <div className="w-[100px] pt-[10px]">Insert</div>
          <div className="w-[136px] pt-[10px]">Modeling</div>
          <div className="w-[91px] pt-[10px]">View</div>
          <div className="w-[132px] pt-[10px]">Optimize</div>
          <div className="pt-[10px]">Help</div>
          <div className="mt-[6px] mr-[8px] ml-auto flex h-[36px] w-[126px] items-center rounded-[4px] bg-[#107c66] pl-[10px] text-[16px] text-white">
            <ShareIcon />
            <span className="ml-[12px]">Share</span>
            <ChevronDown size={18} className="ml-[5px]" />
          </div>
        </div>

        <div className="flex">
          <RGroup w="w-[239px]" pad="pl-[18px]" label="Clipboard">
            <div className="flex w-[52px] flex-col items-center text-[#c8c8c8]">
              <svg width="48" height="54" viewBox="0 0 48 54" fill="none">
                <rect x="3" y="8" width="32" height="38" fill="#fdf1e2" stroke="#f3d3a9" strokeWidth="2" />
                <path d="M12 4h14v7H12z" fill="#fff" stroke="#ccc" strokeWidth="1.6" />
                <rect x="22" y="22" width="24" height="25" fill="#fbfbfb" stroke="#ccc" strokeWidth="1.6" />
              </svg>
              <div className="-mt-[6px] text-[16.5px] leading-[25px]">Paste</div>
            </div>
            <div className="-mt-[3px] ml-[8px] flex flex-col gap-[10px] text-[17px] leading-[25px] text-[#c8c8c8]">
              <div className="flex items-center">
                <svg width="26" height="26" viewBox="0 0 26 26" fill="none">
                  <path d="M8 1l8 16M18 1l-8 16" stroke="#bbb" strokeWidth="1.5" />
                  <circle cx="8" cy="21" r="3.5" stroke="#8fbde0" strokeWidth="1.5" />
                  <circle cx="18" cy="21" r="3.5" stroke="#8fbde0" strokeWidth="1.5" />
                </svg>
                <span className="ml-[3px]">Cut</span>
              </div>
              <div className="flex items-center">
                <svg width="26" height="26" viewBox="0 0 26 26" fill="none" stroke="#c4c4c4" strokeWidth="1.5">
                  <path d="M2 2h11v18H2z" />
                  <path d="M7 6h10l5 5v14H7z" fill="#fbfbfb" />
                  <path d="M11 15h7M11 19h7" />
                </svg>
                <span className="ml-[3px]">Copy</span>
              </div>
              <div className="flex items-center">
                <svg width="26" height="26" viewBox="0 0 26 26" fill="none">
                  <path d="M16 2l8 6-7 6-6-5z" fill="#fff" stroke="#c4c4c4" strokeWidth="1.5" />
                  <path d="M11 8l6 7-7 9-8-9z" fill="#f5d5ac" stroke="#e8c79c" />
                </svg>
                <span className="ml-[3px] whitespace-nowrap">Format painter</span>
              </div>
            </div>
          </RGroup>
          <RGroup w="w-[550px]" pad="pl-[9px]" label="Data">
            <RItem w="w-[64px]" icon={<GetDataIcon />} l1="Get" l2="data" caret />
            <RItem w="w-[86px]" icon={<ExcelIcon />} l1="Excel" l2="workbook" />
            <RItem w="w-[92px]" icon={<OneLakeIcon />} l1="OneLake" l2="data hub" caret />
            <RItem w="w-[60px]" icon={<SqlIcon />} l1="SQL" l2="Server" />
            <RItem w="w-[60px]" icon={<EnterDataIcon />} l1="Enter" l2="data" />
            <RItem w="w-[84px]" icon={<DataverseIcon />} l1="Dataverse" l2="" />
            <RItem w="w-[82px]" icon={<RecentIcon />} l1="Recent" l2="sources" caret />
          </RGroup>
          <RGroup w="w-[173px]" pad="pl-[11px]" label="Queries">
            <RItem w="w-[88px]" icon={<TransformIcon />} l1="Transform" l2="data" caret />
            <RItem w="w-[60px]" icon={<RefreshIcon />} l1="Refresh" l2="" />
          </RGroup>
          <RGroup w="w-[220px]" pad="pl-[12px]" label="Insert">
            <RItem w="w-[60px]" icon={<NewVisualIcon />} l1="New" l2="visual" />
            <RItem w="w-[62px]" icon={<TextBoxIcon />} l1="Text" l2="box" />
            <RItem w="w-[74px]" icon={<MoreVisualsIcon />} l1="More" l2="visuals" caret />
          </RGroup>
          <RGroup w="w-[279px]" pad="pl-[13px]" label="Calculations">
            <RItem w="w-[108px]" icon={<NewCalcIcon />} l1="New visual" l2="calculation" caret off />
            <RItem w="w-[72px]" icon={<NewMeasureIcon />} l1="New" l2="measure" />
            <RItem w="w-[74px]" icon={<QuickMeasureIcon />} l1="Quick" l2="measure" />
          </RGroup>
          <RGroup w="w-[109px]" pad="justify-center" label="Sensitivity">
            <RItem w="w-[90px]" icon={<SensitivityIcon />} l1="Sensitivity" l2="" caret off />
          </RGroup>
          <RGroup w="w-[88px]" pad="justify-center" label="Share">
            <RItem w="w-[70px]" icon={<PublishIcon />} l1="Publish" l2="" />
          </RGroup>
          <RGroup w="w-[88px]" pad="justify-center" label="Copilot">
            <RItem w="w-[70px]" icon={<CopilotIcon />} l1="Copilot" l2="" />
          </RGroup>
          <div className="flex flex-1 items-end justify-end pr-[6px] pb-[5px]">
            <ChevronUp size={16} strokeWidth={2.5} className="text-[#333]" />
          </div>
        </div>
      </div>

      {/* main area */}
      <div className="flex h-[732px] shrink-0">
        {/* left nav */}
        <div className="relative flex w-[62px] shrink-0 flex-col items-center border-r border-[#e1dfdd] bg-[#f3f2f1] pt-[18px]">
          <div className="absolute top-0 left-0 h-[60px] w-[4px] bg-[#107c66]" />
          <svg width="24" height="24" viewBox="0 0 24 24" fill="none" stroke="#333" strokeWidth="1.5">
            <path d="M2 22h20M4 5h3v15H4zM10.500 11h3v9h-3zM17 3h3v17h-3z" />
          </svg>
          <svg className="mt-[36px]" width="26" height="24" viewBox="0 0 26 24" fill="none" stroke="#8a8a8a" strokeWidth="1.5">
            <path d="M2 1h22v22H2zM2 6h22M2 12h22M2 18h22M9 6v17M17 6v17" />
          </svg>
          <svg className="mt-[34px]" width="28" height="28" viewBox="0 0 28 28" fill="none" stroke="#8a8a8a" strokeWidth="1.5">
            <path d="M14 1h12v10H14zM2 10h12v10H2zM16 17h10v10H16zM2 15h12M14 6h12M16 22h10" />
          </svg>
          <div className="relative mt-[32px] h-[30px] w-[28px]">
            <svg width="26" height="26" viewBox="0 0 26 26" fill="none" stroke="#8a8a8a" strokeWidth="1.3">
              <path d="M7 16V1h9l6 6v13c0 2-1 3-2 4" />
              <path d="M16 1v6h6" />
            </svg>
            <span className="absolute top-[14px] left-0 bg-[#f3f2f1] text-[10px] leading-[14px] font-bold text-[#777]">DAX</span>
          </div>
        </div>

        {/* center */}
        <div className="flex w-[1317px] shrink-0 flex-col">
          <div className="flex h-[679px]">
            <div className="h-full w-[1268px] bg-white pl-[38px]">
              <div className="h-[670px] w-[1191px] border-x-[3px] border-b-[3px] border-dotted border-x-[#666] border-b-[#666] bg-[#f1f1f1]">
                <div className="flex h-[84px] justify-center bg-white pt-[4px] font-['Liberation_Serif',serif] text-[39.5px] leading-[50px] font-bold whitespace-pre text-[#222]">
                  {"Task 5 : Reasons  For  Investment"}
                </div>
                <div className="mt-[17px] h-[108px] bg-white pl-[11px]">
                  <div className="h-[24px] pt-[5px] text-[11px] leading-[19px] font-semibold text-black">Reason_Mutual</div>
                  <div className="ml-[12px] flex h-[77px] w-[1139px] text-[18px] font-semibold text-[#3a32d0]">
                    <div className="flex flex-1 items-center justify-center border border-[#8da38a] bg-[#56f50a]">Better Returns</div>
                    <div className="ml-[1px] flex flex-1 items-center justify-center border border-[#8da38a] bg-[#56f50a]">Fund Diversification</div>
                    <div className="ml-[1px] flex flex-1 items-center justify-center border border-[#8da38a] bg-[#56f50a]">Tax Benefits</div>
                  </div>
                </div>
                <div className="flex items-start pt-[12px]">
                  <div className="mt-[17px] h-[411px] w-[329px] rounded-[24px] border-2 border-[#4aa3d8] bg-[#3da6ab] shadow-[8px_10px_14px_rgba(205,215,120,0.55)]">
                    <DurationChart />
                  </div>
                  <div className="mt-[17px] ml-[24px] h-[411px] w-[320px] rounded-[24px] border-2 border-[#3535c0] bg-[#cfa727] shadow-[8px_10px_14px_rgba(90,150,220,0.45)]">
                    <MonitorChart />
                  </div>
                  <div className="ml-[29px] flex w-[217px] flex-col gap-[15px]">
                    <KpiCard
                      className="h-[204px] border-[#5a2ab0] bg-[#c0d631] pt-[72px] shadow-[8px_8px_14px_rgba(90,100,130,0.45)]"
                      value="3"
                      valueClass="text-[#dc1f1f]"
                      label="Tax Benefits"
                    />
                    <KpiCard
                      className="h-[209px] border-[#1edc6e] bg-[#b25283] pt-[74px] shadow-[8px_8px_14px_rgba(205,215,120,0.5)]"
                      value="13"
                      valueClass="text-[#4f1db5]"
                      label="Fund Diversification"
                    />
                  </div>
                  <KpiCard
                    className="mt-[80px] ml-[15px] h-[222px] w-[233px] border-[#3535c0] bg-[#1edf6e] pt-[81px] shadow-[8px_10px_14px_rgba(140,230,110,0.55)]"
                    value="24"
                    valueClass="text-[#e80bd0]"
                    label="Better Returns"
                  />
                </div>
              </div>
            </div>
            {/* filters pane */}
            <div className="flex w-[49px] shrink-0 flex-col items-center border-l border-[#c8c8c8] bg-white pt-[20px]">
              <DoubleChevron left />
              <svg className="mt-[21px]" width="18" height="20" viewBox="0 0 18 20" fill="none" stroke="#333" strokeWidth="1.5">
                <path d="M17 1v18L9 12H1z" />
              </svg>
              <div className="mt-[12px] -translate-x-[2px] text-[22px] leading-[24px] font-semibold text-[#252423] [writing-mode:vertical-rl]">Filters</div>
            </div>
          </div>

          {/* page tabs */}
          <div className="flex h-[53px] bg-[#f3f2f1]">
            <div className="relative flex w-[191px] items-center border-r border-[#888]">
              <svg className="absolute top-[11px] left-[17px]" width="30" height="26" viewBox="0 0 30 26" fill="none" stroke="#444" strokeWidth="1.5">
                <path d="M2 1h26v19H2zM15 20v4M9 24.500h12" />
              </svg>
              <div className="absolute top-[42px] left-[14px] h-[4px] w-[36px] rounded-full bg-[#107c66]" />
              <svg className="absolute top-[7px] left-[89px]" width="18" height="32" viewBox="0 0 18 32" fill="none" stroke="#444" strokeWidth="1.5">
                <path d="M1 1h16v30H1z" />
                <circle cx="9" cy="26" r="1" fill="#444" />
              </svg>
              <div className="absolute top-[21px] left-[139px] h-0 w-0 border-y-[6px] border-r-[6px] border-y-transparent border-r-[#c4c4c4]" />
              <div className="absolute top-[21px] left-[173px] h-0 w-0 border-y-[6px] border-l-[6px] border-y-transparent border-l-[#c4c4c4]" />
            </div>
            {["Task 1", "Task 2", "Task 3", "Task 4"].map((t) => (
              <div key={t} className="flex w-[109px] items-center justify-center border-r border-[#ddd] bg-white text-[16px]">{t}</div>
            ))}
            <div className="relative flex w-[110px] items-center justify-center border-r border-[#ddd] bg-white text-[16px] font-semibold">
              Task 5
              <span className="absolute top-[3px] right-[6px] text-[14px] leading-[16px] font-semibold">x</span>
              <div className="absolute right-0 bottom-0 left-0 h-[6px] bg-[#107c66]" />
            </div>
            {["Task 6", "Task 7"].map((t) => (
              <div key={t} className="flex w-[109px] items-center justify-center border-r border-[#ddd] bg-white text-[16px]">{t}</div>
            ))}
            <div className="flex w-[58px] items-center justify-center bg-[#107c66] text-white">
              <Plus size={22} strokeWidth={4} />
            </div>
          </div>
        </div>

        {/* visualizations pane */}
        <div className="relative flex w-[271px] shrink-0 flex-col border-x border-[#e1dfdd] bg-[#f3f2f1]">
          <div className="flex h-[60px] items-center justify-between pr-[12px] pl-[12px] text-[22px] font-medium">
            Visualizations
            <DoubleChevron />
          </div>
          <div className="pl-[12px] text-[16px] leading-[18px] font-medium">Build visual</div>
          <div className="mt-[8px] flex items-start pl-[12px]">
            <div className="flex h-[48px] w-[48px] flex-col items-center rounded-[4px] bg-[#cbcac9] pt-[6px]">
              <div className="h-[1px] w-[30px] bg-[#333]" />
              <div className="mt-[3px] h-[12px] w-[36px] border border-dashed border-[#111] bg-[#107c66]" />
              <div className="mt-[5px] h-[12px] w-[36px] border border-dashed border-[#111] bg-[#107c66]" />
            </div>
            <svg className="mt-[5px] ml-[56px]" width="40" height="40" viewBox="0 0 40 40" fill="none" stroke="#333" strokeWidth="1.5">
              <path d="M15 36H4V2h14l9 9v6M18 2v9h9" />
              <path d="M36 15L23 30c-2 3-5 6-10 6 3-2 3-5 5-7l14-16z" fill="#f3f2f1" />
            </svg>
          </div>
          <div className="relative mt-[19px] h-0 border-t border-[#a0a0a0]">
            <div className="absolute -top-[8px] left-[28px] h-[15px] w-[15px] rotate-45 border-t border-l border-[#a0a0a0] bg-[#f3f2f1]" />
          </div>
          <div className="mt-[9px] ml-[8px] grid w-[252px] auto-rows-[42px] grid-cols-6">
            {vizIcons.map((_, i) => <VizIcon key={i} i={i} />)}
          </div>
          <div className="mt-[2px] ml-[20px] text-[18px] leading-[20px] font-bold tracking-[2px] text-[#333]">...</div>
          <div className="mt-[25px] border-t border-[#dcdcdc]" />
          <div className="mt-[14px] pl-[17px] text-[16px] leading-[22px]">Values</div>
          <div className="mt-[8px] ml-[6px] flex h-[42px] w-[254px] items-center border border-dashed border-[#c8c8c8] bg-white pl-[15px] text-[16px]">Add data fields here</div>
          <div className="mt-[17px] pl-[17px] text-[16px] leading-[24px] font-medium text-[#444]">Drill through</div>
          <div className="mt-[13px] flex h-[24px] items-center pr-[33px] pl-[17px] text-[16px]">
            Cross-report
            <div className="ml-auto flex h-[24px] w-[48px] items-center rounded-full border border-[#888] bg-white pl-[6px] text-[12px] text-[#777]">
              <div className="mr-[2px] h-[12px] w-[12px] rounded-full bg-[#666]" />Off
            </div>
          </div>
          <div className="mt-[16px] flex h-[24px] items-center pr-[33px] pl-[17px] text-[16px]">
            Keep all filters
            <div className="ml-auto flex h-[24px] w-[48px] items-center rounded-full bg-[#107c66] pl-[7px] text-[12px] text-white">
              On<div className="ml-[3px] h-[13px] w-[13px] rounded-full bg-white" />
            </div>
          </div>
          <div className="absolute top-[509px] right-[1px] h-[171px] w-[7px] rounded-full bg-[#d2d2d0]" />
        </div>

        {/* data pane */}
        <div className="w-[270px] shrink-0 bg-[#f3f2f1]">
          <div className="flex h-[60px] items-center justify-between pr-[13px] pl-[13px] text-[22px] font-medium">
            Data
            <DoubleChevron />
          </div>
          <div className="mt-[8px] ml-[7px] flex h-[36px] w-[256px] items-center rounded-[5px] border border-b-2 border-[#c8c8c8] border-b-[#777] bg-white pl-[18px] text-[19px] text-[#555]">
            <Search size={21} strokeWidth={1.5} />
            <span className="ml-[10px]">Search</span>
          </div>
          <div className="mt-[20px] flex items-center pl-[21px] text-[16.5px] text-[#444]">
            <ChevronRight size={18} strokeWidth={1.5} />
            <svg className="ml-[5px]" width="18" height="18" viewBox="0 0 18 18" fill="none" stroke="#333" strokeWidth="1.5">
              <rect x="1" y="1" width="16" height="16" rx="2" />
              <path d="M1 6.500h16M1 11.500h16M6.500 1v16M11.500 1v16" />
            </svg>
            <span className="ml-[8px]">Data_set 2</span>
          </div>
        </div>
      </div>

      {/* status bar */}
      <div className="flex h-[35px] shrink-0 items-center border-t border-[#dcdcdc] bg-[#f3f2f1] pl-[6px] text-[17px] text-[#444]">
        Page 5 of 7
        <div className="ml-auto flex items-center pr-[27px]">
          <span className="font-semibold">-</span>
          <div className="relative ml-[6px] h-[1px] w-[150px] bg-[#555]">
            <div className="absolute -top-[8px] left-[40px] h-[16px] w-[6px] bg-[#555]" />
            <div className="absolute -top-[4px] left-[75px] h-[9px] w-[1px] bg-[#555]" />
          </div>
          <span className="ml-[8px] text-[20px] leading-[20px]">+</span>
          <span className="ml-[20px] text-[#666]">62%</span>
          <svg className="ml-[29px]" width="24" height="20" viewBox="0 0 24 20" fill="none">
            <rect x="1" y="1" width="22" height="18" stroke="#888" />
            <path d="M5 8V4h5M19 8V4h-5M5 12v4h5M19 12v4h-5" stroke="#444" strokeWidth="1.5" />
          </svg>
        </div>
      </div>

      {/* taskbar */}
      <div className="flex h-[73px] shrink-0 items-center border-t-[3px] border-[#111] bg-[linear-gradient(90deg,#1b2230_0%,#18233f_22%,#0f2360_45%,#12235a_68%,#1b2230_82%)] pb-[2px] pl-[34px] text-white">
        <WidgetIcon />
        <div className="ml-[14px] w-[160px] text-[17px] leading-[24px]">
          <div>Upcoming</div>
          <div className="text-[#c8c8c8]">Earnings</div>
        </div>
        <div className="ml-[264px]"><WinLogo /></div>
        <div className="ml-[20px] flex h-[48px] w-[330px] items-center rounded-full border border-[#56618a] bg-[#343f72] pl-[16px] text-[18px] text-[#d8d8d8]">
          <Search size={25} strokeWidth={2} />
          <span className="ml-[12px]">Search</span>
          <div className="ml-auto pr-[4px]"><SearchArt /></div>
        </div>
        <div className="relative ml-[20px] h-[36px] w-[36px]">
          <div className="absolute top-0 right-0 h-[26px] w-[26px] rounded-[3px] bg-[#e4e4e4]" />
          <div className="absolute bottom-0 left-0 h-[26px] w-[26px] rounded-[3px] bg-[#666]/90" />
        </div>
        <div className="ml-[29px]"><StoreIcon /></div>
        <div className="ml-[32px]"><EdgeIcon /></div>
        <div className="ml-[29px] flex h-[36px] w-[36px] items-center justify-center bg-[linear-gradient(135deg,#2470ee,#5b22e8)] text-[21px] font-bold tracking-[-4px] text-white italic">//\</div>
        <svg className="ml-[31px]" width="34" height="38" viewBox="0 0 34 38">
          <path d="M0 0l17 9 17-9v28L17 38 0 28z" fill="#b3241f" />
          <path d="M7 11l10 7 10-7v13l-10 7-10-7z" fill="#14213f" />
        </svg>
        <div className="ml-[31px]"><CopilotIcon size={36} id="cpt" /></div>
        <div className="relative ml-[30px] h-[36px] w-[36px]">
          <div className="absolute top-0 left-0 h-[8px] w-[18px] rounded-t-[2px] bg-[#d99f0a]" />
          <div className="absolute top-[6px] h-[30px] w-[36px] rounded-[2px] bg-[#ffcf48]" />
          <div className="absolute bottom-0 left-[10px] h-[14px] w-[18px] rounded-t-[3px] bg-[#0f78c9]" />
          <div className="absolute -bottom-[12px] left-[13px] h-[7px] w-[9px] rounded-full bg-[#8a93a8]" />
        </div>
        <div className="relative ml-[19px] flex h-[60px] w-[56px] items-center justify-center rounded-[6px] bg-[#2a3350]">
          <svg width="28" height="36" viewBox="0 0 28 36">
            <rect x="0" y="17" width="12" height="19" fill="#f5d85c" />
            <rect x="8" y="9" width="12" height="27" fill="#eab92c" />
            <rect x="17" y="0" width="11" height="36" fill="#c98a0a" />
          </svg>
          <div className="absolute bottom-[2px] left-[18px] h-[5px] w-[22px] rounded-full bg-[#4cc2ff]" />
        </div>
        <ChevronUp size={24} strokeWidth={2} className="ml-[107px]" />
        <svg className="ml-[24px]" width="26" height="22" viewBox="0 0 26 22">
          <path d="M13 1c4 0 7 3 7 7 3 0 5 2 5 5 0 4-2 8-5 8H5c-3 0-5-2-5-5s2-5 5-5c0-6 4-10 8-10z" fill="#eee" />
          <path d="M5 21l8-9 9 9z" fill="#aaa" />
        </svg>
        <div className="ml-[13px] w-[60px] text-center text-[17px] leading-[24px]">
          <div>ENG</div>
          <div>IN</div>
        </div>
        <svg className="ml-[14px]" width="24" height="24" viewBox="0 0 24 24" fill="none" stroke="#fff" strokeWidth="1.8">
          <path d="M2 9c6-6 14-6 20 0M6 13c4-4 8-4 12 0M9 17c2-2 4-2 6 0" />
          <circle cx="12" cy="20" r="1" fill="#fff" />
        </svg>
        <svg className="ml-[11px]" width="24" height="24" viewBox="0 0 24 24" fill="none" stroke="#fff" strokeWidth="1.6">
          <path d="M2 9v6h4l6 5V4L6 9zM16 8c2 2 2 6 0 8M19 5c3 4 3 10 0 14" />
        </svg>
        <svg className="ml-[12px]" width="26" height="24" viewBox="0 0 26 24" fill="none" stroke="#fff" strokeWidth="1.6">
          <rect x="2" y="4" width="19" height="16" rx="4" />
          <rect x="5" y="7" width="11" height="10" fill="#fff" />
          <path d="M23.500 10v4" />
        </svg>
        <div className="ml-auto pr-[28px] text-right text-[17.5px] leading-[24px]">
          <div>08:05</div>
          <div>18-02-2025</div>
        </div>
      </div>
    </div>
  );
}
